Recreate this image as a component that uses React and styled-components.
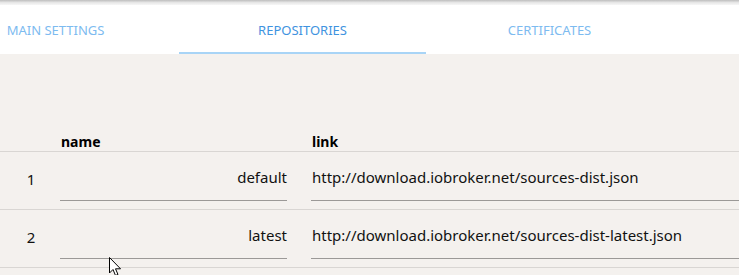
import styled, { createGlobalStyle } from 'styled-components';

const Global = createGlobalStyle`
body {
  margin: 0;
  background-color: #f4f1ee;
  font-family: "Noto Sans", "Open Sans", sans-serif;
  overflow: hidden;
}
`;

const Page = styled.div`
position: relative;
width: 739px;
height: 275px;
overflow: hidden;
`;

const TopShade = styled.div`
height: 5px;
background: linear-gradient(#bdbdbd, #e6e6e6 50%, #f7f7f7);
`;

const TabBar = styled.div`
height: 49px;
background-color: #ffffff;
overflow: hidden;
`;

const TabStrip = styled.div`
display: flex;
margin-left: -68px;
height: 100%;
`;

const Tab = styled.div`
width: 247px;
flex: none;
display: flex;
align-items: center;
justify-content: center;
box-sizing: border-box;
padding-top: 2px;
font-size: 13px;
text-transform: uppercase;
color: ${p => (p.active ? '#3f93e0' : '#7dbbf0')};
border-bottom: 2px solid ${p => (p.active ? '#a8d4f6' : 'transparent')};
`;

const Table = styled.div`
margin-top: 76px;
`;

const Row = styled.div`
display: grid;
grid-template-columns: 60px 251px 1fr;
align-items: ${p => (p.head ? 'center' : 'start')};
border-bottom: 1px solid #d9d6d3;
height: ${p => (p.head ? '21px' : '57px')};
`;

const HeadCell = styled.div`
font-size: 14px;
font-weight: 700;
color: #000;
padding-left: 1px;
padding-top: 1px;
`;

const Index = styled.div`
align-self: center;
text-align: center;
font-size: 15px;
color: #111;
padding-left: 2px;
padding-bottom: 3px;
`;

const Field = styled.div`
width: ${p => p.width || 'auto'};
box-sizing: border-box;
border-bottom: 1px solid #9b9997;
height: 49px;
display: flex;
align-items: center;
justify-content: ${p => (p.right ? 'flex-end' : 'flex-start')};
padding-left: ${p => (p.right ? '0' : '1px')};
padding-top: 1px;
font-size: 15px;
color: #111;
`;

const Cursor = styled.svg`
position: absolute;
left: 109px;
top: 257px;
`;

const tabs = ['Main settings', 'Repositories', 'Certificates'];

const repos = [
  { name: 'default', link: 'http://download.iobroker.net/sources-dist.json' },
  { name: 'latest', link: 'http://download.iobroker.net/sources-dist-latest.json' },
];

export default function App() {
  return (
    <Page>
      <Global />
      <TopShade />
      <TabBar>
        <TabStrip>
          {tabs.map(t => (
            <Tab key={t} active={t === 'Repositories'}>{t}</Tab>
          ))}
        </TabStrip>
      </TabBar>
      <Table>
        <Row head>
          <div />
          <HeadCell>name</HeadCell>
          <HeadCell>link</HeadCell>
        </Row>
        {repos.map((r, i) => (
          <Row key={r.name}>
            <Index>{i + 1}</Index>
            <Field width="227px" right>{r.name}</Field>
            <Field>{r.link}</Field>
          </Row>
        ))}
      </Table>
      <Cursor width="13" height="20" viewBox="0 0 13 20">
        <path d="M0.5 0.5 L0.5 16 L4 12.5 L6.5 18.5 L9 17.5 L6.5 11.8 L11.5 11.8 Z" fill="#fff" stroke="#000" strokeWidth="1" />
      </Cursor>
    </Page>
  );
}
